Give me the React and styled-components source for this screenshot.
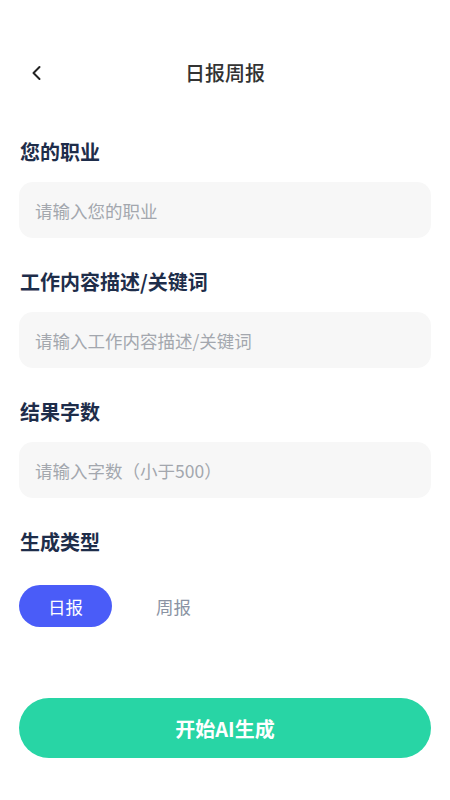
import React, { useState } from "react";
import styled, { createGlobalStyle } from "styled-components";

const Global = createGlobalStyle`
  html, body { margin: 0; padding: 0; background: #fff; }
  body { font-family: "Noto Sans CJK SC", "Noto Sans", sans-serif; }
  * { box-sizing: border-box; }
`;

const Page = styled.div`
  width: 450px;
  min-height: 800px;
  background: #fff;
  padding: 48px 19px 0;
  display: flex;
  flex-direction: column;
`;

const Header = styled.div`
  position: relative;
  height: 50px;
  display: flex;
  align-items: center;
  justify-content: center;
`;

const Back = styled.button`
  position: absolute;
  left: 8px;
  top: 50%;
  transform: translateY(-50%);
  border: 0;
  background: none;
  padding: 0;
  width: 20px;
  height: 20px;
  display: flex;
  align-items: center;
  justify-content: center;
`;

const Title = styled.h1`
  margin: 0;
  font-size: 20px;
  font-weight: 500;
  color: #333;
  line-height: 1;
`;

const Form = styled.div`
  display: flex;
  flex-direction: column;
  padding-top: 41px;
`;

const Section = styled.div`
  display: flex;
  flex-direction: column;
  gap: ${(p) => (p.$wide ? "30px" : "17px")};
  margin-bottom: 31px;
`;

const Label = styled.div`
  padding-left: 1px;
  font-size: 20px;
  font-weight: 700;
  line-height: 26px;
  color: #1e2d4a;
`;

const Input = styled.input`
  width: 100%;
  height: 56px;
  border: 0;
  outline: none;
  border-radius: 14px;
  background: #f7f7f7;
  padding: 0 16px;
  font-family: inherit;
  font-size: 17.5px;
  color: #333;
  &::placeholder { color: #a3a7ae; }
`;

const Toggle = styled.div`
  display: flex;
  gap: 15px;
`;

const Chip = styled.button`
  width: 93px;
  height: 42px;
  border: 0;
  border-radius: 21px;
  background: ${(p) => (p.$active ? "#4a5cf8" : "transparent")};
  color: ${(p) => (p.$active ? "#fff" : "#8a93a3")};
  font-family: inherit;
  font-size: 17.5px;
  padding: 0;
`;

const Submit = styled.button`
  margin-top: 40px;
  width: 100%;
  height: 60px;
  border: 0;
  border-radius: 30px;
  background: #28d5a5;
  color: #fff;
  font-family: inherit;
  font-size: 20px;
  font-weight: 700;
`;

export default function App() {
  const [type, setType] = useState("day");
  return (
    <>
      <Global />
      <Page>
        <Header>
          <Back aria-label="返回">
            <svg width="14" height="16" viewBox="0 0 14 16">
              <path d="M9.5 2 L3.5 8 L9.5 14" fill="none" stroke="#222" strokeWidth="2" strokeLinecap="round" strokeLinejoin="round" />
            </svg>
          </Back>
          <Title>日报周报</Title>
        </Header>
        <Form>
          <Section>
            <Label>您的职业</Label>
            <Input placeholder="请输入您的职业" />
          </Section>
          <Section>
            <Label>工作内容描述/关键词</Label>
            <Input placeholder="请输入工作内容描述/关键词" />
          </Section>
          <Section>
            <Label>结果字数</Label>
            <Input placeholder="请输入字数（小于500）" />
          </Section>
          <Section $wide>
            <Label>生成类型</Label>
            <Toggle>
              <Chip $active={type === "day"} onClick={() => setType("day")}>日报</Chip>
              <Chip $active={type === "week"} onClick={() => setType("week")}>周报</Chip>
            </Toggle>
          </Section>
        </Form>
        <Submit>开始AI生成</Submit>
      </Page>
    </>
  );
}
